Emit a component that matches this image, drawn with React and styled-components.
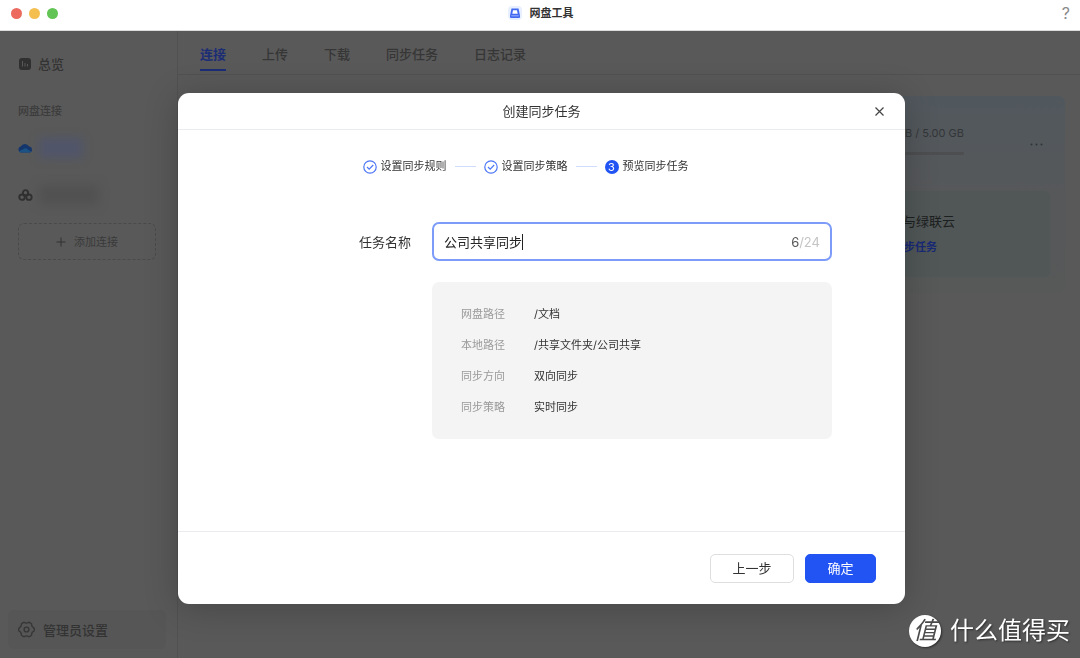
import React, { useState } from 'react';
import styled, { createGlobalStyle } from 'styled-components';

const GlobalStyle = createGlobalStyle`
    * {
        box-sizing: border-box;
    }
    body {
        margin: 0;
        background: #595959;
        font-family: Inter, 'Noto Sans CJK SC', sans-serif;
        font-size: 13px;
        line-height: 20px;
        color: #333;
    }
    button,
    input {
        font: inherit;
        color: inherit;
        margin: 0;
        padding: 0;
        border: 0;
        background: none;
    }
    button {
        cursor: pointer;
    }
`;

const Window = styled.div`
    min-height: 100vh;
    display: flex;
    flex-direction: column;
`;
const TitleBar = styled.header`
    height: 31px;
    padding: 0 10px 4px 11px;
    display: grid;
    grid-template-columns: 1fr auto 1fr;
    align-items: center;
    background: #fff;
    border-bottom: 1px solid #dcdcdc;
`;
const Lights = styled.div`
    display: flex;
    gap: 7px;
`;
const Light = styled.button`
    width: 11px;
    height: 11px;
    border-radius: 50%;
    background: ${(props) => props.$color};
`;
const AppName = styled.h1`
    margin: 0;
    display: flex;
    align-items: center;
    gap: 8px;
    font-size: 11px;
    font-weight: 700;
`;
const Help = styled.button`
    justify-self: end;
    font-size: 16px;
    color: #8a8a8a;
`;

const Main = styled.div`
    flex: 1;
    display: flex;
    background: #595959;
    color: #363636;
`;
const Sidebar = styled.aside`
    flex: 0 0 178px;
    padding: 23px 21px 9px 18px;
    display: flex;
    flex-direction: column;
    border-right: 1px solid #515151;
`;
const SideLink = styled.a`
    display: flex;
    align-items: center;
    gap: 6px;
    color: #333;
    font-weight: 500;
    text-decoration: none;
`;
const SideTitle = styled.h2`
    margin: 27px 0 16px;
    font-size: 11px;
    font-weight: 500;
    color: #3c3c3c;
`;
const Drive = styled.a`
    height: 22px;
    margin-bottom: 25px;
    display: flex;
    align-items: center;
    gap: 6px;
`;
const HiddenName = styled.span`
    width: ${(props) => props.$width};
    height: 20px;
    background: ${(props) => props.$color};
    filter: blur(5px);
`;
const AddButton = styled.button`
    height: 37px;
    margin-top: -8px;
    display: flex;
    align-items: center;
    justify-content: center;
    gap: 8px;
    font-size: 11px;
    border: 1px dashed #4a4a4a;
    border-radius: 6px;
    color: #3a3a3a;
`;
const AdminLink = styled(SideLink)`
    height: 39px;
    margin: auto -10px 0;
    padding: 0 10px;
    gap: 8px;
    border-radius: 6px;
    background: #565656;
`;

const Content = styled.main`
    flex: 1;
`;
const Tabs = styled.nav`
    height: 44px;
    padding: 13px 22px 0;
    display: flex;
    align-items: flex-start;
    gap: 36px;
    border-bottom: 1px solid #515151;
`;
const Tab = styled.a`
    height: 27px;
    text-decoration: none;
    font-weight: ${(props) => (props.$active ? 700 : 500)};
    color: ${(props) => (props.$active ? '#1c2d76' : '#363636')};
    border-bottom: 2px solid ${(props) => (props.$active ? '#1c2d76' : 'transparent')};
`;
const DriveCard = styled.section`
    margin: 21px 15px 0 22px;
    padding: 28px 15px 16px;
    border-radius: 6px;
    background: linear-gradient(#51585d, #56585a 50%, #575858);
`;
const Usage = styled.div`
    height: 67px;
    display: flex;
    justify-content: flex-end;
    gap: 66px;
`;
const Quota = styled.div`
    width: 120px;
    height: 31px;
    border-bottom: 3px solid #4c4e50;
    border-radius: 1px;
    font-size: 11px;
    line-height: 18px;
    text-align: right;
    color: #333638;
`;
const More = styled.button`
    height: 34px;
    margin-right: 7px;
    color: #303438;
`;
const TaskCard = styled.div`
    min-height: 86px;
    padding: 20px 95px 0 0;
    display: flex;
    flex-direction: column;
    align-items: flex-end;
    gap: 6px;
    border-radius: 6px;
    background: #515757;
    color: #1d2020;
`;
const TaskLink = styled.a`
    margin-right: 18px;
    font-size: 11px;
    font-weight: 700;
    text-decoration: none;
    color: #182976;
`;

const Overlay = styled.div`
    position: fixed;
    inset: 31px 0 0;
    padding: 62px 16px 54px 19px;
    display: flex;
    align-items: flex-start;
    justify-content: center;
    overflow: auto;
`;
const Dialog = styled.form`
    width: 100%;
    max-width: 727px;
    border-radius: 11px;
    background: #fff;
    box-shadow: 0 4px 34px rgba(0, 0, 0, 0.22);
`;
const DialogHeader = styled.header`
    height: 37px;
    padding: 0 20px;
    display: grid;
    grid-template-columns: 1fr auto 1fr;
    align-items: center;
    border-bottom: 1px solid #e9ebee;
`;
const DialogTitle = styled.h2`
    grid-column: 2;
    margin: 0;
    font-size: 13px;
    font-weight: 400;
`;
const CloseButton = styled.button`
    justify-self: end;
    display: flex;
`;
const DialogBody = styled.div`
    min-height: 401px;
    padding: 27px 73px 40px;
`;
const Steps = styled.ol`
    margin: 0 32px 46px 0;
    padding: 0;
    display: flex;
    align-items: center;
    justify-content: center;
    gap: 8px;
    list-style: none;
    font-size: 11px;
    line-height: 19px;
`;
const Step = styled.li`
    display: flex;
    align-items: center;
    gap: 4px;

    &:not(:last-child)::after {
        content: '';
        width: 21px;
        height: 1px;
        margin-left: 4px;
        background: #cfdcfb;
    }
`;
const StepNumber = styled.span`
    width: 14px;
    height: 14px;
    border-radius: 50%;
    background: #2254f4;
    color: #fff;
    line-height: 14px;
    text-align: center;
`;
const Field = styled.div`
    display: grid;
    grid-template-columns: 160px 1fr;
    align-items: center;
    column-gap: 21px;
    row-gap: 21px;
`;
const Label = styled.label`
    text-align: right;
`;
const InputBox = styled.div`
    height: 39px;
    padding: 0 10px;
    display: flex;
    align-items: center;
    border: 2px solid #7d9bf8;
    border-radius: 7px;
`;
const NameInput = styled.input`
    field-sizing: content;
    min-width: 1px;
    max-width: 320px;
    outline: none;
    color: #222;
    caret-color: transparent;
`;
const Caret = styled.span`
    width: 1px;
    height: 16px;
    visibility: ${(props) => (props.$visible ? 'visible' : 'hidden')};
    background: #222;
`;
const Counter = styled.span`
    margin-left: auto;
    color: #c4c4c4;

    b {
        font-weight: 400;
        color: #555;
    }
`;
const Summary = styled.dl`
    grid-column: 2;
    margin: 0;
    padding: 22px 29px;
    display: grid;
    grid-template-columns: 44px 1fr;
    gap: 11px 29px;
    border-radius: 7px;
    background: #f4f4f4;
    font-size: 11px;

    dt {
        color: #999;
    }
    dd {
        margin: 0;
    }
`;
const DialogFooter = styled.footer`
    height: 73px;
    padding: 0 29px;
    display: flex;
    align-items: center;
    justify-content: flex-end;
    gap: 11px;
    border-top: 1px solid #e9ebee;
`;
const Button = styled.button`
    width: ${(props) => (props.$primary ? '71px' : '84px')};
    height: 29px;
    border: 1px solid ${(props) => (props.$primary ? '#2254f4' : '#dedede')};
    border-radius: 5px;
    background: ${(props) => (props.$primary ? '#2254f4' : '#fff')};
    color: ${(props) => (props.$primary ? '#fff' : '#333')};
`;

const Brand = styled.div`
    position: fixed;
    right: 10px;
    bottom: 11px;
    display: flex;
    align-items: center;
    gap: 9px;
    font-size: 24px;
    line-height: 32px;
    color: #fff;
    text-shadow: 1px 1px 2px rgba(0, 0, 0, 0.5);
`;
const BrandMark = styled.span`
    width: 32px;
    height: 32px;
    border-radius: 50%;
    background: #fff;
    color: #4a4a4a;
    text-align: center;
    font-style: italic;
    text-shadow: none;
    box-shadow: 1px 1px 2px rgba(0, 0, 0, 0.5);
`;

const DriveLogo = () => (
    <svg width="14" height="14" viewBox="0 0 14 14">
        <rect width="14" height="14" rx="4" fill="#e8efff" />
        <path d="M3.500 2.500h7l1.500 7V11a1 1 0 0 1-1 1H3a1 1 0 0 1-1-1V9.500z" fill="#4169f2" />
        <path d="M5 4.200h4l.7 3.600H4.300z" fill="#fff" />
        <path d="M3.300 9.800h7.400" stroke="#9db4fb" />
    </svg>
);

const OverviewIcon = () => (
    <svg width="14" height="14" viewBox="0 0 14 14">
        <rect x="1" y="1" width="12" height="12" rx="3" fill="#303030" />
        <path d="M4.500 4v5.500M7 6v3.500M9.500 7v2.500" stroke="#595959" />
    </svg>
);

const CloudIcon = () => (
    <svg width="15" height="10" viewBox="0 0 15 10">
        <path d="M3.500 9.500a3 3 0 0 1-.8-5.900A4.600 4.600 0 0 1 11 3.400a3.100 3.100 0 0 1 .7 6.100z" fill="#15366c" />
        <path d="M3.500 9.500a2.800 2.800 0 0 1-2.300-1.300L7.500 5l5.800 3.700a2.800 2.800 0 0 1-1.600.8z" fill="#1d5284" />
    </svg>
);

const RingsIcon = () => (
    <svg width="15" height="12" viewBox="0 0 15 12" fill="none" stroke="#303030" strokeWidth="1.900">
        <circle cx="7.500" cy="3.700" r="2.600" />
        <circle cx="4" cy="8.200" r="2.700" />
        <circle cx="11" cy="8.200" r="2.700" />
    </svg>
);

const PlusIcon = () => (
    <svg width="10" height="10" viewBox="0 0 10 10" stroke="#333">
        <path d="M5 .5v9M.5 5h9" />
    </svg>
);

const GearIcon = () => (
    <svg width="17" height="17" viewBox="0 0 17 17" fill="none" stroke="#363636" strokeWidth="1.400" strokeLinejoin="round">
        <path d="M15.900 6.900Q16.600 8.500 15.900 10.100Q13.300 11.200 13.600 14.100Q12.400 15.400 10.850 15.700Q8.500 14 6.150 15.700Q4.600 15.400 3.400 14.100Q3.700 11.200 1.100 10.100Q.4 8.500 1.100 6.900Q3.700 5.800 3.400 2.900Q4.600 1.600 6.150 1.300Q8.500 3 10.850 1.300Q12.400 1.600 13.600 2.900Q13.300 5.800 15.900 6.900z" />
        <circle cx="8.500" cy="8.500" r="2.400" />
    </svg>
);

const MoreIcon = () => (
    <svg width="13" height="3" viewBox="0 0 13 3" fill="currentColor">
        <circle cx="1.500" cy="1.500" r="1" />
        <circle cx="6.500" cy="1.500" r="1" />
        <circle cx="11.500" cy="1.500" r="1" />
    </svg>
);

const CloseIcon = () => (
    <svg width="11" height="11" viewBox="0 0 11 11" stroke="#444" strokeWidth="1.200">
        <path d="m1.500 1.500 8 8M9.500 1.500l-8 8" />
    </svg>
);

const DoneIcon = () => (
    <svg width="14" height="14" viewBox="0 0 14 14" fill="none" stroke="#4d76f6" strokeWidth="1.200">
        <circle cx="7" cy="7" r="6.200" />
        <path d="m4 7 2.200 2.200L10.200 5" />
    </svg>
);

const tabs = ['连接', '上传', '下载', '同步任务', '日志记录'];

const summary = [
    ['网盘路径', '/文档'],
    ['本地路径', '/共享文件夹/公司共享'],
    ['同步方向', '双向同步'],
    ['同步策略', '实时同步'],
];

const App = () => {
    const [name, setName] = useState('公司共享同步');
    const [focused, setFocused] = useState(true);

    return (
        <Window>
            <GlobalStyle />
            <TitleBar>
                <Lights>
                    <Light $color="#ec6a5e" aria-label="关闭窗口" />
                    <Light $color="#f4bf4f" aria-label="最小化" />
                    <Light $color="#61c454" aria-label="最大化" />
                </Lights>
                <AppName>
                    <DriveLogo />
                    网盘工具
                </AppName>
                <Help>?</Help>
            </TitleBar>

            <Main>
                <Sidebar>
                    <SideLink href="#overview">
                        <OverviewIcon />
                        总览
                    </SideLink>
                    <SideTitle>网盘连接</SideTitle>
                    <Drive href="#onedrive" aria-label="OneDrive">
                        <CloudIcon />
                        <HiddenName $width="44px" $color="#50556a" />
                    </Drive>
                    <Drive href="#baidu" aria-label="网盘">
                        <RingsIcon />
                        <HiddenName $width="60px" $color="#515151" />
                    </Drive>
                    <AddButton>
                        <PlusIcon />
                        添加连接
                    </AddButton>
                    <AdminLink href="#admin">
                        <GearIcon />
                        管理员设置
                    </AdminLink>
                </Sidebar>
                <Content>
                    <Tabs>
                        {tabs.map((tab, i) => (
                            <Tab key={tab} href={`#tab-${i}`} $active={i === 0}>
                                {tab}
                            </Tab>
                        ))}
                    </Tabs>
                    <DriveCard>
                        <Usage>
                            <Quota>GB / 5.00 GB</Quota>
                            <More aria-label="更多">
                                <MoreIcon />
                            </More>
                        </Usage>
                        <TaskCard>
                            <span>与绿联云</span>
                            <TaskLink href="#create">步任务</TaskLink>
                        </TaskCard>
                    </DriveCard>
                </Content>
            </Main>

            <Overlay>
                <Dialog
                    role="dialog"
                    aria-labelledby="dialog-title"
                    onSubmit={(e) => e.preventDefault()}
                >
                    <DialogHeader>
                        <DialogTitle id="dialog-title">创建同步任务</DialogTitle>
                        <CloseButton type="button" aria-label="关闭">
                            <CloseIcon />
                        </CloseButton>
                    </DialogHeader>
                    <DialogBody>
                        <Steps>
                            <Step>
                                <DoneIcon />
                                设置同步规则
                            </Step>
                            <Step>
                                <DoneIcon />
                                设置同步策略
                            </Step>
                            <Step>
                                <StepNumber>3</StepNumber>
                                预览同步任务
                            </Step>
                        </Steps>
                        <Field>
                            <Label htmlFor="task-name">任务名称</Label>
                            <InputBox>
                                <NameInput
                                    id="task-name"
                                    value={name}
                                    maxLength={24}
                                    autoFocus
                                    onFocus={() => setFocused(true)}
                                    onBlur={() => setFocused(false)}
                                    onChange={(e) => setName(e.target.value)}
                                />
                                <Caret $visible={focused} />
                                <Counter>
                                    <b>{name.length}</b>/24
                                </Counter>
                            </InputBox>
                            <Summary>
                                {summary.map(([label, value]) => (
                                    <React.Fragment key={label}>
                                        <dt>{label}</dt>
                                        <dd>{value}</dd>
                                    </React.Fragment>
                                ))}
                            </Summary>
                        </Field>
                    </DialogBody>
                    <DialogFooter>
                        <Button type="button">上一步</Button>
                        <Button type="submit" $primary>
                            确定
                        </Button>
                    </DialogFooter>
                </Dialog>
            </Overlay>

            <Brand>
                <BrandMark>值</BrandMark>
                什么值得买
            </Brand>
        </Window>
    );
};

export default App;
